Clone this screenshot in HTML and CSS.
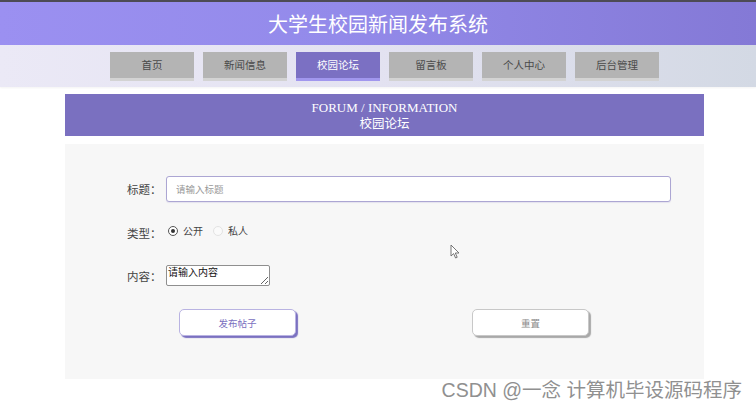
FILE: index.html
```html
<!DOCTYPE html>
<html lang="zh">
<head>
<meta charset="utf-8">
<title>大学生校园新闻发布系统</title>
<link rel="stylesheet" href="styles.css">
</head>
<body>
<div class="topline"></div>
<header class="header">
  <h1 class="title">大学生校园新闻发布系统</h1>
</header>
<nav class="navbar">
  <ul class="nav">
    <li class="nav-item">首页</li>
    <li class="nav-item">新闻信息</li>
    <li class="nav-item active">校园论坛</li>
    <li class="nav-item">留言板</li>
    <li class="nav-item">个人中心</li>
    <li class="nav-item">后台管理</li>
  </ul>
</nav>
<main class="wrap">
  <div class="main">
    <div class="banner">
      <div class="banner-en">FORUM / INFORMATION</div>
      <div class="banner-cn">校园论坛</div>
    </div>
    <form class="form">
      <div class="row row-title">
        <label class="label">标题：</label>
        <input class="input" type="text" placeholder="请输入标题">
      </div>
      <div class="row row-type">
        <span class="label">类型：</span>
        <span class="radio checked"></span><span class="radio-text">公开</span>
        <span class="radio"></span><span class="radio-text">私人</span>
      </div>
      <div class="row row-content">
        <label class="label">内容：</label>
        <textarea class="textarea">请输入内容</textarea>
      </div>
      <div class="row row-btns">
        <button type="button" class="btn btn-primary">发布帖子</button>
        <button type="button" class="btn btn-reset">重置</button>
      </div>
    </form>
  </div>
</main>
<svg class="cursor" width="11" height="15" viewBox="0 0 11 15"><path d="M1 1 L1 12 L3.6 9.6 L5.6 14 L7.2 13.3 L5.3 9 L9 9 Z" fill="#fff" stroke="#666" stroke-width="0.9" stroke-linejoin="round"/></svg>
<div class="watermark">CSDN @一念 计算机毕设源码程序</div>
</body>
</html>
```
FILE: styles.css
```css
html, body {
  margin: 0;
  padding: 0;
  background: #ffffff;
}
body {
  font-family: "Noto Sans CJK SC", "Noto Sans", sans-serif;
  position: relative;
  width: 756px;
  height: 410px;
  overflow: hidden;
}
.topline {
  height: 2px;
  background: #4d4b55;
}
.header {
  height: 43px;
  background: linear-gradient(90deg, #9b90f1 0%, #938aea 45%, #8479d6 100%);
  display: flex;
  align-items: center;
  justify-content: center;
}
.title {
  margin: 0;
  color: #ffffff;
  font-size: 20px;
  font-weight: normal;
  line-height: 1;
}
.navbar {
  height: 42px;
  background: linear-gradient(90deg, #ebe9f6 0%, #e3e2f1 50%, #d3d9e4 100%);
  padding-left: 13px;
  box-sizing: border-box;
  box-shadow: 0 1px 2px rgba(0,0,0,0.05);
}
.nav {
  list-style: none;
  margin: 0;
  padding: 7px 0 0;
  display: flex;
  justify-content: center;
  gap: 9px;
}
.nav-item {
  width: 84px;
  height: 26px;
  line-height: 26px;
  background: #b4b4b4;
  border-bottom: 3px solid #d3d3d3;
  text-align: center;
  font-size: 10.5px;
  color: #4a4a4a;
}
.nav-item.active {
  background: #7b70c3;
  border-bottom-color: #a197ee;
  color: #ffffff;
}
.wrap {
  padding-left: 13px;
  padding-top: 7px;
}
.main {
  width: 639px;
  margin: 0 auto;
}
.banner {
  height: 42px;
  box-sizing: border-box;
  padding-top: 6px;
  background: #7a70c0;
  color: #ffffff;
  text-align: center;
  font-family: "Liberation Serif", "Noto Sans CJK SC", serif;
  font-size: 13px;
  line-height: 16px;
}
.banner-cn {
  font-size: 12.5px;
}
.form {
  margin-top: 8px;
  height: 235px;
  box-sizing: border-box;
  background: #f7f7f7;
  padding-top: 32px;
  padding-left: 62px;
}
.row {
  display: flex;
  align-items: center;
}
.label {
  width: 39px;
  font-size: 11.5px;
  color: #444;
  flex: none;
}
.row-title {
  height: 26px;
}
.input {
  width: 505px;
  height: 26px;
  box-sizing: border-box;
  border: 1px solid #aca6d3;
  border-radius: 3px;
  background: #ffffff;
  padding: 0 9px;
  font-family: "Noto Sans CJK SC", sans-serif;
  font-size: 9.5px;
  outline: none;
  box-shadow: 0 1px 1px rgba(120,110,190,0.15);
}
.input::placeholder {
  color: #9a9a9a;
}
.row-type {
  margin-top: 20px;
  height: 20px;
}
.row-type .label {
  margin-top: 2px;
}
.radio {
  width: 10px;
  height: 10px;
  box-sizing: border-box;
  border-radius: 50%;
  border: 1px solid #e3e3e3;
  background: #fafafa;
  margin-left: 2px;
  margin-right: 5px;
  margin-bottom: 2px;
  position: relative;
  flex: none;
}
.radio.checked {
  border-color: #555;
  background: #fff;
}
.radio.checked::after {
  content: "";
  position: absolute;
  left: 2px;
  top: 2px;
  width: 4px;
  height: 4px;
  border-radius: 50%;
  background: #333;
}
.radio-text {
  font-size: 10px;
  color: #444;
  margin-right: 8px;
  margin-bottom: 3px;
}
.row-content {
  margin-top: 23px;
  height: 21px;
  align-items: flex-start;
}
.row-content .label {
  margin-top: 3px;
}
.textarea {
  width: 104px;
  height: 21px;
  box-sizing: border-box;
  margin: 0;
  padding: 0 1px;
  border: 1px solid #8f8f8f;
  border-radius: 2px;
  background: #ffffff;
  font-family: "Noto Sans CJK SC", sans-serif;
  font-size: 10px;
  line-height: 12px;
  color: #111;
  resize: both;
  outline: none;
}
.row-btns {
  margin-top: 23px;
  padding-left: 52px;
}
.btn {
  width: 117px;
  height: 27px;
  box-sizing: border-box;
  border-radius: 5px;
  background: #ffffff;
  font-family: "Noto Sans CJK SC", sans-serif;
  font-size: 9.5px;
  padding: 0;
  cursor: pointer;
}
.btn-primary {
  border: 1px solid #b9b3e2;
  color: #7a70c0;
  box-shadow: 2px 2px 1px #7a70c0;
}
.btn-reset {
  margin-left: 176px;
  border: 1px solid #c8c8c8;
  color: #8a8a8a;
  box-shadow: 2px 2px 1px #a8a8a8;
}
.cursor {
  position: absolute;
  left: 450px;
  top: 244px;
}
.watermark {
  position: absolute;
  right: 14px;
  top: 377px;
  font-family: "Liberation Sans", "Noto Sans CJK SC", sans-serif;
  font-size: 19.5px;
  line-height: 26px;
  color: #909090;
  text-shadow: 0 0 1px #ffffff, 0 0 2px #ffffff;
  white-space: nowrap;
}
```
